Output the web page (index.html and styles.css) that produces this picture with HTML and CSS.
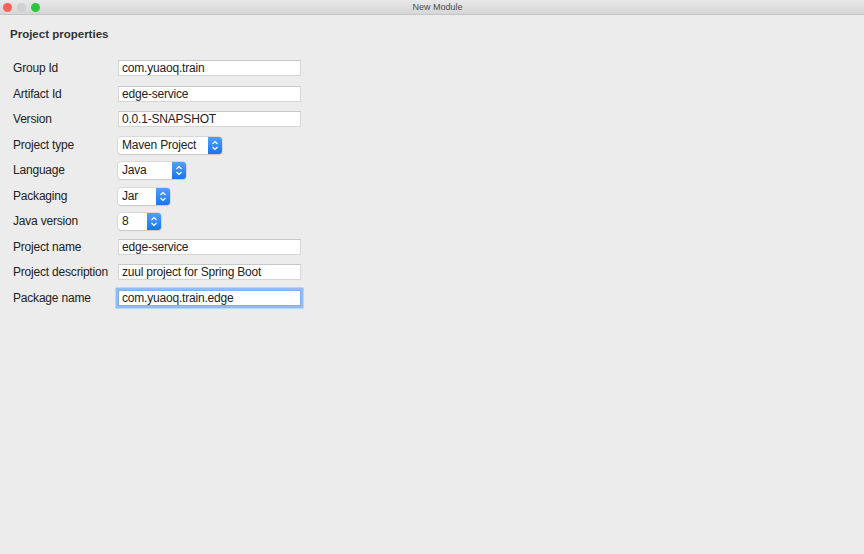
FILE: index.html
```html
<!DOCTYPE html>
<html lang="en">
<head>
  <meta charset="UTF-8">
  <title>New Module</title>
  <link rel="stylesheet" href="styles.css">
</head>
<body>
  <div class="titlebar">
    <div class="lights">
      <span class="light red"></span>
      <span class="light grey"></span>
      <span class="light green"></span>
    </div>
    <div class="title">New Module</div>
  </div>

  <div class="content">
    <h2 class="heading">Project properties</h2>
    <div class="form">
      <label>Group Id</label>
      <div class="field wide">com.yuaoq.train</div>

      <label>Artifact Id</label>
      <div class="field wide">edge-service</div>

      <label>Version</label>
      <div class="field wide">0.0.1-SNAPSHOT</div>

      <label>Project type</label>
      <div class="select w-type"><span class="value">Maven Project</span><span class="arrows"><svg width="8" height="11" viewBox="0 0 8 11"><path d="M1.5 4 L4 1.5 L6.5 4 M1.5 7 L4 9.5 L6.5 7" fill="none" stroke="#fff" stroke-width="1.2"/></svg></span></div>

      <label>Language</label>
      <div class="select w-lang"><span class="value">Java</span><span class="arrows"><svg width="8" height="11" viewBox="0 0 8 11"><path d="M1.5 4 L4 1.5 L6.5 4 M1.5 7 L4 9.5 L6.5 7" fill="none" stroke="#fff" stroke-width="1.2"/></svg></span></div>

      <label>Packaging</label>
      <div class="select w-pack"><span class="value">Jar</span><span class="arrows"><svg width="8" height="11" viewBox="0 0 8 11"><path d="M1.5 4 L4 1.5 L6.5 4 M1.5 7 L4 9.5 L6.5 7" fill="none" stroke="#fff" stroke-width="1.2"/></svg></span></div>

      <label>Java version</label>
      <div class="select w-java"><span class="value">8</span><span class="arrows"><svg width="8" height="11" viewBox="0 0 8 11"><path d="M1.5 4 L4 1.5 L6.5 4 M1.5 7 L4 9.5 L6.5 7" fill="none" stroke="#fff" stroke-width="1.2"/></svg></span></div>

      <label>Project name</label>
      <div class="field wide">edge-service</div>

      <label>Project description</label>
      <div class="field wide">zuul project for Spring Boot</div>

      <label>Package name</label>
      <div class="field wide focused">com.yuaoq.train.edge</div>
    </div>
  </div>
</body>
</html>
```

FILE: styles.css
```css
body {
  margin: 0;
  background: #ececec;
  font-family: 'Liberation Sans', Arial, sans-serif;
  color: #222;
  height: 554px;
  overflow: hidden;
}
.titlebar {
  height: 14px;
  background: linear-gradient(#e8e8e8, #d6d6d6);
  border-bottom: 1px solid #c4c4c4;
  display: flex;
  align-items: center;
  justify-content: center;
  position: relative;
}
.lights {
  position: absolute;
  left: 3px;
  top: 3px;
  display: flex;
  gap: 5px;
}
.light {
  width: 9px;
  height: 9px;
  border-radius: 50%;
}
.red { background: #fc5f57; }
.grey { background: #d0d0d0; }
.green { background: #2ac640; }
.title {
  font-size: 9px;
  color: #4d4d4d;
  margin-left: 11px;
}
.content {
  padding: 12px 10px 0 10px;
}
.heading {
  margin: 0;
  font-size: 11.5px;
  font-weight: bold;
  color: #333;
  line-height: 14px;
}
.form {
  margin-top: 19px;
  margin-left: 3px;
  display: grid;
  grid-template-columns: 105px auto;
  grid-auto-rows: 25.5px;
  align-items: start;
  justify-items: start;
}
.form label {
  font-size: 12px;
  letter-spacing: -0.2px;
  line-height: 16px;
}
.field {
  box-sizing: border-box;
  height: 16px;
  background: #fff;
  border: 1px solid #d6d6d6;
  border-top-color: #c8c8c8;
  font-size: 12px;
  letter-spacing: -0.2px;
  line-height: 14px;
  padding: 0 3px;
  white-space: nowrap;
}
.wide { width: 183px; }
.focused {
  box-shadow: 0 0 0 2.5px #8fbef5;
  border-color: #7fb0ee;
}
.select {
  box-sizing: border-box;
  height: 17px;
  display: flex;
  background: #fff;
  border-radius: 3px;
  box-shadow: 0 0 0 0.5px #c4c4c4, 0 1px 1px rgba(0, 0, 0, 0.12);
  overflow: hidden;
  font-size: 12px;
  letter-spacing: -0.2px;
  line-height: 17px;
}
.select .value {
  flex: 1;
  padding-left: 4px;
}
.select .arrows {
  width: 14px;
  background: linear-gradient(#4fa0fb, #1b74f0);
  display: flex;
  align-items: center;
  justify-content: center;
}
.w-type { width: 104px; }
.w-lang { width: 68px; }
.w-pack { width: 52px; }
.w-java { width: 43px; }
```
